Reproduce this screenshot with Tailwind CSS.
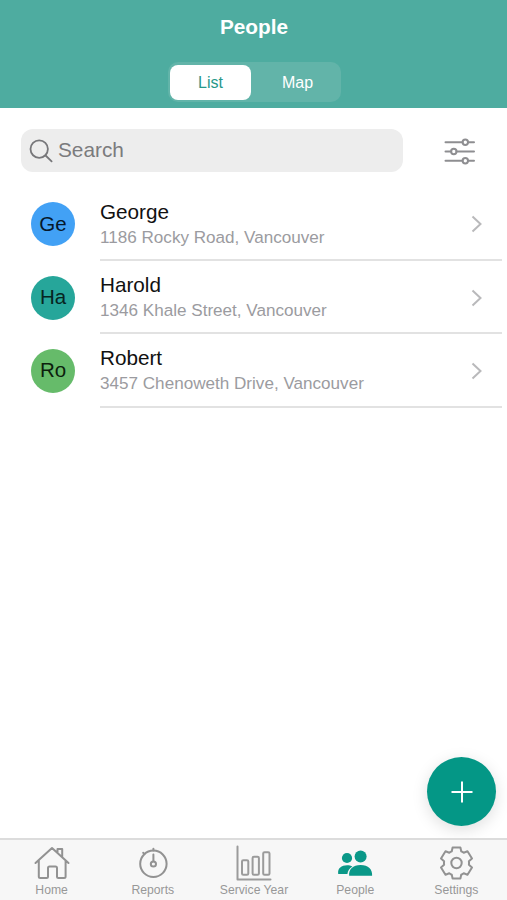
<!DOCTYPE html>
<html lang="en">
<head>
<meta charset="utf-8">
<title>People</title>
<script src="https://cdn.jsdelivr.net/npm/@tailwindcss/browser@4"></script>
</head>
<body class="bg-white">
<div class="relative flex h-[900px] w-[507px] flex-col overflow-hidden font-['Liberation_Sans',Arial,sans-serif]">
  <header class="flex h-[108px] flex-col items-center bg-[#4eaca0]">
    <h1 class="mt-[15px] ml-px text-[20.8px] leading-6 font-bold text-white">People</h1>
    <div class="mt-[23px] ml-[2px] flex h-[40px] w-[173px] rounded-[10px] bg-[#62b4a9] p-[3px] pl-[2px] text-[16px]">
      <button class="flex h-[35px] w-[81px] items-center justify-center rounded-[8px] bg-white text-[#27988a]">List</button>
      <button class="flex h-[35px] flex-1 items-center justify-center pl-[6px] text-white">Map</button>
    </div>
  </header>

  <div class="flex h-[79px] items-start pt-[21px] pl-[21px]">
    <div class="flex h-[43px] w-[382px] items-center rounded-[12px] bg-[#ededed] pl-2 text-[20.8px] leading-6 text-[#7b7b7d]">
      <svg class="mr-[5px] size-6" viewBox="0 0 24 24" fill="none" stroke="#77777a" stroke-width="1.8" stroke-linecap="round"><circle cx="10.2" cy="10.1" r="8.7"/><path d="M16.6 16.5l6 5.8"/></svg>
      <span class="pb-[2px]">Search</span>
    </div>
    <svg class="mt-[7px] ml-[41px] h-[30px] w-8" viewBox="0 0 32 30" fill="none" stroke="#8e8e91" stroke-width="2" stroke-linecap="round"><path d="M1.5 6.2h17M24 6.2h6M1.5 15.5h5.7M12.5 15.5H30M1.5 24.8h17M24 24.8h6"/><circle cx="21.3" cy="6.2" r="2.7"/><circle cx="9.8" cy="15.5" r="2.7"/><circle cx="21.3" cy="24.8" r="2.7"/></svg>
  </div>

  <ul>
    <li class="flex h-[74px] pl-[31px]">
      <div class="mt-[15px] mr-[25px] flex size-[44px] items-center justify-center rounded-full bg-[#42a1f5] text-[20.5px] text-[#06182a]">Ge</div>
      <div class="flex w-[402px] items-start justify-between border-b-2 border-[#e2e2e2]">
        <div class="pt-[13px]"><p class="text-[20.7px] leading-6 text-[#111]">George</p><p class="mt-[4px] text-[17.1px] leading-5 text-[#9b9ba0]">1186 Rocky Road, Vancouver</p></div>
        <svg class="mt-[28px] mr-[19px] h-[18px] w-3" viewBox="0 0 12 18" fill="none" stroke="#b9b9bb" stroke-width="2"><path d="M1.5 1.5L9.5 9 1.5 16.5"/></svg>
      </div>
    </li>
    <li class="flex h-[73px] pl-[31px]">
      <div class="mt-[15px] mr-[25px] flex size-[44px] items-center justify-center rounded-full bg-[#26a69a] pb-px text-[20.5px] text-[#062521]">Ha</div>
      <div class="flex w-[402px] items-start justify-between border-b-2 border-[#e2e2e2]">
        <div class="pt-3"><p class="text-[20.7px] leading-6 text-[#111]">Harold</p><p class="mt-[4px] text-[17.1px] leading-5 text-[#9b9ba0]">1346 Khale Street, Vancouver</p></div>
        <svg class="mt-[28px] mr-[19px] h-[18px] w-3" viewBox="0 0 12 18" fill="none" stroke="#b9b9bb" stroke-width="2"><path d="M1.5 1.5L9.5 9 1.5 16.5"/></svg>
      </div>
    </li>
    <li class="flex h-[74px] pl-[31px]">
      <div class="mt-[15px] mr-[25px] flex size-[44px] items-center justify-center rounded-full bg-[#66bb6a] pb-px text-[20.5px] text-[#0c1f0d]">Ro</div>
      <div class="flex w-[402px] items-start justify-between border-b-2 border-[#e2e2e2]">
        <div class="pt-3"><p class="text-[20.7px] leading-6 text-[#111]">Robert</p><p class="mt-[4px] text-[17.1px] leading-5 text-[#9b9ba0]">3457 Chenoweth Drive, Vancouver</p></div>
        <svg class="mt-[28px] mr-[19px] h-[18px] w-3" viewBox="0 0 12 18" fill="none" stroke="#b9b9bb" stroke-width="2"><path d="M1.5 1.5L9.5 9 1.5 16.5"/></svg>
      </div>
    </li>
  </ul>

  <button class="absolute right-[11px] bottom-[74px] flex size-[69px] items-center justify-center rounded-full bg-[#049786] shadow-[0_4px_16px_rgba(0,0,0,0.13)]" aria-label="Add">
    <svg class="size-6" viewBox="0 0 24 24" stroke="#fff" stroke-width="2"><path d="M12 1.5v21M1.5 12h21"/></svg>
  </button>

  <nav class="relative mt-auto grid h-[62px] grid-cols-5 border-t-2 border-[#dcdcdc] bg-[#f7f7f7] pl-px text-[12.2px] leading-[14px] text-[#979797]">
    <a class="flex flex-col items-center pt-1">
      <svg class="h-[38px] w-9" viewBox="0 0 36 38" fill="none" stroke="#929292" stroke-width="2" stroke-linecap="round" stroke-linejoin="round"><path d="M1.5 19L18 4 34.5 19M4.8 16.5V32.5Q4.8 34 6.3 34H12.5Q14 34 14 32.5V24Q14 22.5 15.5 22.5H21.5Q23 22.5 23 24V32.5Q23 34 24.5 34H30.1Q31.6 34 31.6 32.5V16.5M23.5 8.5V5h4.7v8"/></svg>
      <span class="mt-px">Home</span>
    </a>
    <a class="flex flex-col items-center pt-1">
      <svg class="h-[38px] w-9" viewBox="0 0 36 38" fill="none" stroke="#929292" stroke-width="2" stroke-linecap="round"><circle cx="18.4" cy="19.8" r="13.2"/><circle cx="18.4" cy="20" r="2.6"/><path d="M18.4 10.5v6.8M18.4 4.8v1.6M8.2 8.8l1.2 1.3"/></svg>
      <span class="mt-px">Reports</span>
    </a>
    <a class="flex flex-col items-center pt-1">
      <svg class="h-[38px] w-9" viewBox="0 0 36 38" fill="none" stroke="#9b9b9b" stroke-width="2" stroke-linecap="round" stroke-linejoin="round"><path d="M1.5 2.4v33h33"/><rect x="6" y="16.3" width="6.3" height="14.5" rx="1.3"/><rect x="16.6" y="12.8" width="6.3" height="18" rx="1.3"/><rect x="27.2" y="8.3" width="6.3" height="22.5" rx="1.3"/></svg>
      <span class="mt-px">Service Year</span>
    </a>
    <a class="flex flex-col items-center pt-1">
      <svg class="h-[38px] w-9" viewBox="0 0 36 38" fill="#0a9888"><circle cx="10" cy="14" r="5.1"/><circle cx="23.6" cy="12.4" r="6"/><path d="M1.2 30C.5 24 4.5 21.5 10 21.3c2.1 0 4 .4 5.4 1.1-3 1.8-4.6 4.3-5 7.6zM12.2 31.8c-.8-6.4 3.7-10.8 11.4-10.8s12.1 4.4 11.5 10.8z"/></svg>
      <span class="mt-px">People</span>
    </a>
    <a class="flex flex-col items-center pt-1">
      <svg class="h-[38px] w-9" viewBox="-18.5 -19 36 38" fill="none" stroke="#929292" stroke-width="2" stroke-linejoin="round"><circle r="5.2"/><path d="M-3.9 -15.6H3.9L4.7 -11.8Q6 -11.3 7.2 -10.3L11 -11.8L15.5 -4.4L12.4 -1.7Q12.7 0 12.4 1.7L15.5 4.4L11 11.8L7.2 10.3Q6 11.3 4.7 11.8L3.9 15.6H-3.9L-4.7 11.8Q-6 11.3 -7.2 10.3L-11 11.8L-15.5 4.4L-12.4 1.7Q-12.7 0 -12.4 -1.7L-15.5 -4.4L-11 -11.8L-7.2 -10.3Q-6 -11.3 -4.7 -11.8Z"/></svg>
      <span class="mt-px">Settings</span>
    </a>
  </nav>
</div>
</body>
</html>
